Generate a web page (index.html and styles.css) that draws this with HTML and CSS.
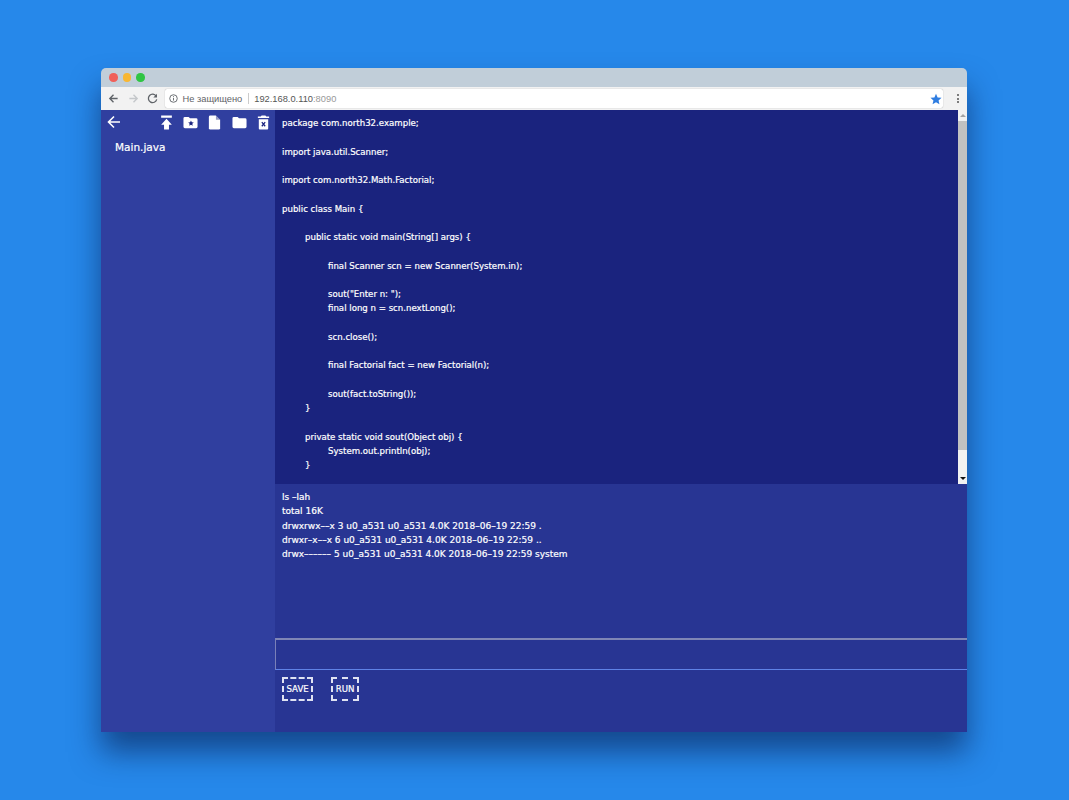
FILE: index.html
```html
<!DOCTYPE html>
<html lang="ru">
<head>
    <meta charset="UTF-8">
    <title>Main.java</title>
    <link rel="stylesheet" href="styles.css">
</head>
<body>
    <div class="window">
        <div class="titlebar">
            <span class="dot dot-red"></span>
            <span class="dot dot-yellow"></span>
            <span class="dot dot-green"></span>
        </div>
        <div class="toolbar">
            <svg class="nav" viewBox="0 0 12 12"><path d="M10.5 6H2M6 2L2 6l4 4" fill="none" stroke="#5f6368" stroke-width="1.5"/></svg>
            <svg class="nav" viewBox="0 0 12 12"><path d="M1.5 6H10M6 2l4 4-4 4" fill="none" stroke="#c4c7ca" stroke-width="1.5"/></svg>
            <svg class="nav" viewBox="0 0 12 12"><path d="M10 3.4A4.6 4.6 0 1 0 10.6 7" fill="none" stroke="#5f6368" stroke-width="1.4"/><path d="M10.9 0.8v4h-4z" fill="#5f6368"/></svg>
            <div class="omnibox">
                <svg class="info" viewBox="0 0 10 10"><circle cx="5" cy="5" r="4.2" fill="none" stroke="#5f6368" stroke-width="1"/><path d="M5 4.3v3M5 2.4v1" stroke="#5f6368" stroke-width="1"/></svg>
                <span class="insecure">Не защищено</span>
                <span class="sep"></span>
                <span class="url">192.168.0.110<span class="port">:8090</span></span>
                <svg class="star" viewBox="0 0 24 24"><path d="M12 1.5l3.2 7.3 7.9.8-6 5.3 1.8 7.8L12 18.6l-6.900 4.100 1.800-7.800-6-5.300 7.900-.8z" fill="#2f7de1"/></svg>
            </div>
            <div class="kebab"><span></span><span></span><span></span></div>
        </div>
        <div class="app">
            <aside class="sidebar">
                <div class="tools">
                    <svg class="back" viewBox="0 0 14 14"><path d="M13 7H2M7 1.500L1.500 7 7 12.500" fill="none" stroke="#fff" stroke-width="1.600"/></svg>
                    <div class="tool-group">
                        <svg class="tool" viewBox="0 0 14 14"><path d="M2 0.500h10v2H2zM7 3.500l5 5.500H9.300v4.500H4.700V9H2z" fill="#fff"/></svg>
                        <svg class="tool" viewBox="0 0 16 14"><path d="M0.500 2.500q0-1.500 1.500-1.500h4l1.500 1.500H14q1.500 0 1.500 1.500v7.500q0 1.500-1.500 1.500H2q-1.500 0-1.500-1.500z" fill="#fff"/><path d="M8.500 4.800l.9 2 2.100.2-1.600 1.400.5 2.100-1.900-1.100-1.900 1.100.5-2.100L5.500 7l2.100-.2z" fill="#1a237e"/></svg>
                        <svg class="tool" viewBox="0 0 14 16"><path d="M2.500 0.500H8.500L13 5v9q0 1.500-1.500 1.500h-9Q1 15.500 1 14V2Q1 0.500 2.500 0.500z" fill="#fff"/><path d="M8.500 0.500V5H13z" fill="#1a237e" opacity=".45"/></svg>
                        <svg class="tool" viewBox="0 0 16 14"><path d="M0.500 2.500q0-1.500 1.500-1.500h4l1.500 1.500H14q1.500 0 1.500 1.500v7.500q0 1.500-1.500 1.500H2q-1.500 0-1.500-1.500z" fill="#fff"/></svg>
                        <svg class="tool" viewBox="0 0 14 16"><path d="M5 0.500h4l1 1h3v1.800H1V1.500h3zM2 4.500h10v10q0 1-1 1H3q-1 0-1-1z" fill="#fff"/><path d="M5.200 7.500l3.600 4.500M8.800 7.500L5.200 12" stroke="#1a237e" stroke-width="1.300"/></svg>
                    </div>
                </div>
                <div class="file">Main.java</div>
            </aside>
            <main class="workspace">
                <div class="editor">
                    <pre class="code">package com.north32.example;

import java.util.Scanner;

import com.north32.Math.Factorial;

public class Main {

	public static void main(String[] args) {

		final Scanner scn = new Scanner(System.in);

		sout("Enter n: ");
		final long n = scn.nextLong();

		scn.close();

		final Factorial fact = new Factorial(n);

		sout(fact.toString());
	}

	private static void sout(Object obj) {
		System.out.println(obj);
	}</pre>
                    <div class="scrollbar">
                        <span class="arrow arrow-up"></span>
                        <div class="track"><div class="thumb"></div></div>
                        <span class="arrow arrow-down"></span>
                    </div>
                </div>
                <pre class="terminal">ls –lah
total 16K
drwxrwx––x 3 u0_a531 u0_a531 4.0K 2018–06–19 22:59 .
drwxr–x––x 6 u0_a531 u0_a531 4.0K 2018–06–19 22:59 ..
drwx–––––– 5 u0_a531 u0_a531 4.0K 2018–06–19 22:59 system</pre>
                <input class="command" type="text">
                <div class="actions">
                    <button class="action" type="button">SAVE</button>
                    <button class="action" type="button">RUN</button>
                </div>
            </main>
        </div>
    </div>
</body>
</html>
```

FILE: styles.css
```css
html, body {
    height: 100%;
}
body {
    margin: 0;
    padding: 68px 102px 68px 101px;
    box-sizing: border-box;
    background-color: #2688ea;
    font-family: "DejaVu Sans", sans-serif;
    overflow: hidden;
}
.window {
    height: 664px;
    display: flex;
    flex-direction: column;
    border-radius: 5px 5px 0 0;
    box-shadow: 0 20px 30px rgba(8, 30, 80, 0.6);
}
.titlebar {
    height: 19px;
    display: flex;
    align-items: center;
    gap: 5px;
    padding-left: 8px;
    background-color: #c1ced9;
    border-radius: 5px 5px 0 0;
}
.dot {
    width: 8.5px;
    height: 8.5px;
    border-radius: 50%;
}
.dot-red { background-color: #f0605a; }
.dot-yellow { background-color: #f8b733; }
.dot-green { background-color: #2fc544; }
.toolbar {
    height: 23px;
    display: flex;
    align-items: center;
    padding: 0 6px 0 7px;
    background-color: #f2f2f2;
}
.nav {
    width: 11px;
    height: 11px;
    margin-right: 8.5px;
}
.omnibox {
    flex: 1;
    height: 19px;
    margin-left: -2px;
    display: flex;
    align-items: center;
    background-color: #fff;
    border-radius: 2px;
    box-shadow: 0 0 1px rgba(0, 0, 0, 0.4);
    font-family: "Liberation Sans", sans-serif;
    font-size: 9.300px;
    color: #5f6368;
}
.info {
    width: 9px;
    height: 9px;
    margin-left: 4px;
    margin-right: 5px;
}
.sep {
    width: 1px;
    height: 11px;
    margin: 0 5.500px;
    background-color: #ccc;
}
.url {
    color: #555;
}
.port {
    color: #999;
}
.star {
    width: 12px;
    height: 12px;
    margin-left: auto;
    margin-right: 1px;
}
.kebab {
    width: 18px;
    display: flex;
    flex-direction: column;
    align-items: flex-end;
    gap: 1.5px;
    padding-right: 2px;
    box-sizing: border-box;
}
.kebab span {
    width: 2px;
    height: 2px;
    background-color: #555;
    border-radius: 50%;
}
.app {
    flex: 1;
    display: flex;
    min-height: 0;
}
.sidebar {
    width: 174px;
    background-color: #303f9f;
    color: #fff;
}
.tools {
    height: 24px;
    display: flex;
    align-items: center;
    padding: 0 4px 0 6px;
}
.back {
    width: 14px;
    height: 14px;
}
.tool-group {
    margin-left: auto;
    display: flex;
    align-items: center;
    gap: 9.300px;
}
.tool {
    width: 15px;
    height: 15px;
}
.file {
    padding: 6px 14px;
    font-size: 10.500px;
    line-height: 14px;
    -webkit-text-stroke: 0.2px #fff;
}
.workspace {
    flex: 1;
    min-width: 0;
    display: flex;
    flex-direction: column;
    background-color: #283593;
}
.editor {
    height: 374px;
    display: flex;
    background-color: #1a237e;
}
.code, .terminal {
    margin: 0;
    padding: 6px 7px;
    font-family: "DejaVu Sans", sans-serif;
    line-height: 14.250px;
    color: #fff;
    tab-size: 23px;
    overflow: hidden;
    -webkit-text-stroke: 0.2px #fff;
}
.code {
    flex: 1;
    font-size: 8.600px;
}
.scrollbar {
    width: 9px;
    display: flex;
    flex-direction: column;
    align-items: center;
    background-color: #f1f1f1;
}
.arrow {
    width: 0;
    height: 0;
    margin: 4px 0;
    border-left: 3px solid transparent;
    border-right: 3px solid transparent;
}
.arrow-up { border-bottom: 3px solid #a3a3a3; }
.arrow-down { border-top: 3px solid #111; }
.track {
    flex: 1;
    width: 100%;
}
.thumb {
    height: 329px;
    background-color: #c1c1c1;
}
.terminal {
    height: 154px;
    box-sizing: border-box;
    flex: none;
    font-size: 9px;
}
.command {
    display: block;
    height: 32px;
    box-sizing: border-box;
    padding: 0 7px;
    border: 1px solid #7a80b8;
    border-top: 2px solid #7f86b5;
    border-bottom-color: #5f82e6;
    border-right: 0;
    background-color: transparent;
    color: #fff;
    outline: none;
}
.actions {
    display: flex;
    gap: 18px;
    padding: 7px;
}
.action {
    height: 24px;
    padding: 0 2.500px;
    background: transparent;
    border: 2px dashed #dfe2f2;
    color: #fff;
    font-family: "DejaVu Sans", sans-serif;
    font-size: 8.600px;
    -webkit-text-stroke: 0.2px #fff;
}
```
